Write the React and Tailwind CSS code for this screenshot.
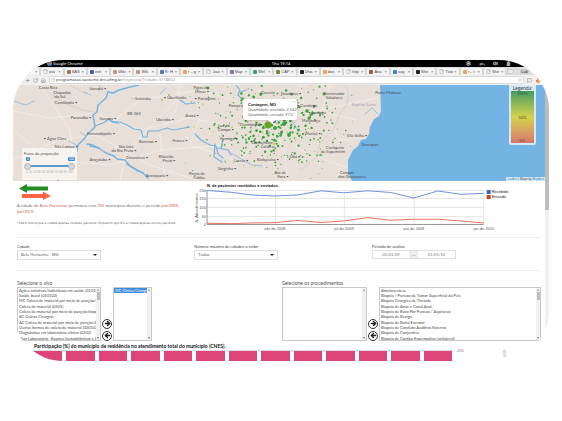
import React from "react";
import { RotateCw, House, ArrowRight, ArrowLeft, Star, File, Settings, Volume2, BatteryFull, Flame, MessageSquare } from "lucide-react";

const tabs = [
  ["", ""],
  ["pro", ""],
  ["SAS", "bg-[#a9744f]"],
  ["esti", "bg-[#3b62b8]"],
  ["Wiki", "bg-[#b79a8c]"],
  ["Wik", "bg-[#b79a8c]"],
  ["R: H", "bg-[#4b79b7]"],
  ["r – g", "bg-[#e9a95c]"],
  ["Java", ""],
  ["Map", "bg-[#8a7398]"],
  ["Wel", "bg-[#3f9b8b]"],
  ["CAP", "bg-[#6f8a3a]"],
  ["Dhis", "bg-[#222222]"],
  ["dos", "bg-[#e9a95c]"],
  ["http", ""],
  ["Ana", "bg-[#b0504e]"],
  ["sug", "bg-[#3f7fe0]"],
  ["Shir", "bg-[#222222]"],
  ["Tuto", ""],
  ["r – t", "bg-[#e9a95c]"],
  ["Shir", ""],
];

const places = [
  [48, 89, "Costa Rica"],
  [62, 94, "Chapadão"],
  [60, 98, "do Sul"],
  [66, 104, "Cassilândia •"],
  [81, 119, "Paranaíba •"],
  [108, 120, "Iturama •"],
  [141, 100, "— Ituiutaba"],
  [175, 99, "• Uberlândia"],
  [134, 115, "BR-365"],
  [165, 121, "Uberaba •"],
  [98, 90, "Itarumã •"],
  [201, 89, "Patos de"],
  [202, 93, "Minas •"],
  [205, 100, "• Patrocínio"],
  [192, 117, "Araxá •"],
  [236, 107, "Pompéu"],
  [268, 94, "Curvelo"],
  [291, 95, "Guanhães •"],
  [334, 95, "Governador"],
  [334, 99, "Valadares"],
  [307, 107, "• Caratinga"],
  [317, 114, "• Ipatinga"],
  [364, 106, "Espírito Santo"],
  [388, 94, "Porto Mattoso"],
  [101, 135, "Fernandópolis •"],
  [55, 140, "• Água Clara"],
  [66, 148, "Três Lagoas •"],
  [126, 148, "São José"],
  [124, 152, "do Rio Preto •"],
  [148, 143, "Barretos •"],
  [180, 142, "Franca •"],
  [100, 161, "Araçatuba •"],
  [137, 159, "Catanduva •"],
  [166, 158, "Ribeirão"],
  [169, 162, "Preto •"],
  [157, 177, "Araraquara •"],
  [224, 127, "Luz do"],
  [226, 131, "Campo •"],
  [229, 140, "Formiga •"],
  [251, 126, "Divinópolis •"],
  [262, 144, "Conselheiro"],
  [268, 148, "Lafaiete"],
  [311, 122, "Manhuaçu"],
  [313, 135, "Muriaé •"],
  [357, 137, "Vila Velha •"],
  [335, 149, "Cachoeiro"],
  [333, 153, "de Itapemirim"],
  [241, 162, "Lavras •"],
  [268, 161, "Barbacena •"],
  [295, 158, "Ubá •"],
  [227, 170, "Varginha •"],
  [197, 175, "Poços de"],
  [199, 179, "Caldas"],
  [280, 174, "Juiz de"],
  [283, 178, "Fora •"],
  [347, 174, "Campos"],
  [352, 178, "dos Goytacazes"],
  [370, 146, "Guarapari"],
];

function makeDots() {
  let seed = 41;
  const next = () => {
    seed = (seed * 16807) % 2147483647;
    return seed / 2147483647;
  };
  const dots = [];
  for (let i = 0; i < 370; i++) {
    const x = 272 + (next() + next() - 1) * 90;
    const y = 128 + (next() * 0.6 + next() * 0.4 - 0.5) * 104;
    const far = Math.hypot(x - 275, (y - 115) * 1.2) / 75;
    const r = 0.4 + next() * Math.max(0.25, 1.4 - far);
    dots.push([x, y, r, next() > 0.95 ? "#c8cf3a" : "#3ba13b"]);
  }
  return dots;
}

const dots = makeDots();

function MapDrawing() {
  return (
    <svg viewBox="13 85 532 96" preserveAspectRatio="xMinYMin slice" className="block h-24 w-full bg-[#e8dfd8]" role="img" aria-label="Mapa de municípios">
      <g fill="none" stroke="#f5f0ea" strokeWidth="0.7">
        <path d="M13 111L50 118 95 113 140 130 190 118 240 128 272 122 320 110 381 97" />
        <path d="M13 160L60 140 96 135 150 165 200 181M96 135L140 100 200 90 260 108 272 122 300 150 347 168" />
        <path d="M40 85L70 130 76 181M180 85L176 110 160 135 165 181M272 122L245 155 220 181M272 122L284 150 288 181M330 85L322 110 340 140 362 138M120 181L126 152 176 100M200 118L190 145 240 162" />
        <path d="M13 130L50 160 110 165 160 150 230 145M300 85L305 107 357 120" />
      </g>
      <path d="M48 92L64 103 82 110 94 112M70 85L86 94" fill="none" stroke="#c9bfba" strokeWidth="0.5" />
      <g fill="none" stroke="#77b3e0" strokeLinejoin="round" strokeLinecap="round">
        <path strokeWidth="1.5" d="M139 85L130 87 119 90 113 93 108 92 106 98 98 105 97 112 93 115 95 127 86 136 84 139 78 145 77 151 70 160 63 172 58 181" />
        <path strokeWidth="1.4" d="M87 144L93 145 100 149 106 153 114 156 117 159 125 160 130 166 137 170 143 173 148 178" />
        <path strokeWidth="1.1" d="M95 126L103 123 109 119 112 122 120 122 127 125 134 129 141 130 143 137 147 137 148 131 158 131 167 128 173 130 190 127" />
        <path strokeWidth="1.6" d="M111 121L118 123M90 146L99 148M127 164L138 171" />
        <path strokeWidth="1.2" d="M195 134L201 140 210 145 216 146 218 154 223 158M215 144L214 157 222 162M218 148L228 150 231 155M223 140L221 148" />
        <path strokeWidth="1.2" d="M236 85L240 90 238 95 242 99M241 92L246 90M180 100L186 104 195 103" />
        <path strokeWidth="0.7" d="M13 101L26 105 34 101M40 181L50 170 68 163M69 141L78 146M86 136L80 132M100 85L99 91M166 88L160 94M84 92L91 95M365 114L372 108 378 114M231 153L243 160 252 165 262 166M287 117L294 124 298 131" />
      </g>
      <path d="M345 85C352 95 347 106 341 112L333 130 320 143 317 157 300 170" fill="none" stroke="#cdc3c8" strokeWidth="0.6" />
      <path d="M380 85L381 111 379 116 374 119 370 127 369 134 366 139 361 140 358 146 353 150 350 156 348 160 348 174 351 178 352 181H545V85Z" fill="#73b4e5" />
      {dots.map(([x, y, r, fill], i) => (
        <circle key={i} cx={x} cy={y} r={r} fill={fill} />
      ))}
      <circle cx="208" cy="88" r="1.4" fill="#3ba13b" />
      <circle cx="261" cy="94" r="1.6" fill="#3ba13b" />
      <circle cx="307" cy="111" r="1.8" fill="#3ba13b" />
      <circle cx="324" cy="94" r="1.4" fill="#3ba13b" />
      <circle cx="289" cy="135" r="1.9" fill="#3ba13b" />
      <circle cx="162" cy="100" r="1.1" fill="#b8c23a" />
      <circle cx="169" cy="95" r="0.8" fill="#3ba13b" />
      <circle cx="284" cy="124" r="2" fill="#3ba13b" />
      <circle cx="275" cy="128" r="2" fill="#3ba13b" />
      <circle cx="268" cy="125" r="3.6" fill="#6aa521" />
      <circle cx="274" cy="121" r="2" fill="#2c64b8" />
      <g fontSize="4" textAnchor="middle" className="font-['Lato',sans-serif]">
        {places.map(([x, y, name]) => (
          <text key={name + x} x={x} y={y} fill={name === "Espírito Santo" ? "#a9a3b5" : "#4c4a4a"}>
            {name}
          </text>
        ))}
      </g>
    </svg>
  );
}

const rangeClass =
  "pointer-events-none absolute inset-0 h-2 w-full appearance-none bg-transparent [&::-webkit-slider-thumb]:h-[7px] [&::-webkit-slider-thumb]:w-[7px] [&::-webkit-slider-thumb]:appearance-none [&::-webkit-slider-thumb]:rounded-full [&::-webkit-slider-thumb]:border [&::-webkit-slider-thumb]:border-[#b5b5b5] [&::-webkit-slider-thumb]:bg-[#d8d8d8]";

function MapPanel() {
  return (
    <section className="relative">
      <MapDrawing />
      <div className="absolute bottom-px left-[9px] h-8 w-[55px] rounded-xs bg-[#f7f5f2]/90 px-[2px] pt-[3px]">
        <label htmlFor="min" className="block text-[4px] leading-[5px]">Faixa da proporção:</label>
        <div className="mt-px flex justify-between text-[3px] leading-[4px] text-white">
          <span className="ml-[2px] rounded-[1px] bg-[#428bca] px-px">0</span>
          <span className="rounded-[1px] bg-[#428bca] px-px">100</span>
        </div>
        <div className="relative mt-px h-2">
          <div className="absolute inset-x-1 top-[3px] h-[2px] bg-[#5a97cf]" />
          <input id="min" type="range" defaultValue="0" className={rangeClass} />
          <input type="range" aria-label="Máximo" defaultValue="100" className={rangeClass} />
        </div>
        <div className="flex justify-between px-[2px] text-[3px] leading-[4px] text-[#aaa]">
          {[0, 10, 20, 30, 40, 50, 60, 70, 80, 90, 100].map((n) => <span key={n}>{n}</span>)}
        </div>
      </div>
      <div className="absolute top-[14px] left-[230px] h-[21px] w-[54px] rounded-[3px] bg-white px-[5px] pt-[3px] font-['Lato',sans-serif] text-[4px] leading-[5px] text-[#666] shadow-sm">
        <p className="font-['Liberation_Sans',sans-serif] font-bold text-[#222]">Contagem, MG</p>
        <p className="whitespace-nowrap">Quantidade recebida: 2,542</p>
        <p className="whitespace-nowrap">Quantidade enviada: 97,5</p>
        <button aria-label="Fechar" className="absolute top-px right-[2px] leading-[4px] text-[#999]">×</button>
        <div className="absolute top-full left-[25px] border-x-4 border-t-[3px] border-x-transparent border-t-white" />
      </div>
      <div className="absolute top-0 right-[9px] w-[27px] rounded-b-xs bg-[#d7e9f5] px-[2px] pb-[2px] text-center text-[#444]">
        <p className="font-['Lato',sans-serif] text-[5px] leading-[6px]">Legenda:</p>
        <div className="flex h-[52px] flex-col justify-between bg-linear-to-b from-[#3f9b5f] via-[#d3d347] to-[#d6756b] text-[4px] leading-[5px]">
          <span>100%</span><span>50%</span><span>0%</span>
        </div>
      </div>
      <div className="absolute right-0 bottom-0 bg-white/70 px-px font-['Open_Sans',sans-serif] text-[3px] leading-[4px] text-[#333]">
        <a href="#leaflet" className="text-[#0078a8]">Leaflet</a> | Maps by <a href="#mapbox" className="text-[#0078a8]">Mapbox</a>
      </div>
    </section>
  );
}

function Chart() {
  return (
    <svg viewBox="194 182 347 51" className="col-span-2 block w-full font-['Liberation_Sans',sans-serif]" fontSize="4" fill="#555" role="img" aria-label="Pacientes recebidos e enviados">
      <text x="207" y="187" fill="#111" fontWeight="bold">N. de pacientes recebidos e enviados.</text>
      <path d="M207 190.5H484M207 198.5H484M207 207.5H484M207 216.5H484M275.5 190V224M344.5 190V224M414.5 190V224M484 190V224" stroke="#dcdcdc" strokeWidth="0.7" />
      <path d="M207 190V224.5H484" stroke="#777" strokeWidth="0.8" fill="none" />
      <polyline fill="none" stroke="#6f8fdd" strokeWidth="1" points="207,190.5 231,192.3 252,195 275,196 298,195 321,190.8 344,192.8 368,190.8 391,192.5 414,198 438,191 461,194.3 484,193.4" />
      <polyline fill="none" stroke="#e8705a" strokeWidth="1" points="207,223.3 231,223.7 252,223 275,222.7 298,220.5 321,222.5 344,221 368,217.7 391,220.3 414,219.3 438,219.3 461,221 484,223" />
      <g textAnchor="end">
        <text x="206" y="192">200</text>
        <text x="206" y="200">150</text>
        <text x="206" y="209">100</text>
        <text x="206" y="218">50</text>
        <text x="206" y="226">0</text>
      </g>
      <g textAnchor="middle">
        <text x="275" y="230">abr de 2009</text>
        <text x="344" y="230">jul de 2009</text>
        <text x="414" y="230">out de 2009</text>
        <text x="484" y="230">jan de 2010</text>
        <text transform="translate(198 208) rotate(-90)">N. Atendimentos</text>
      </g>
      <rect x="487" y="190" width="4" height="4" fill="#3366cc" />
      <rect x="487" y="195" width="4" height="4" fill="#dc3912" />
      <text x="492" y="193" fill="#222">Recebido</text>
      <text x="492" y="198" fill="#222">Enviado</text>
    </svg>
  );
}

function Dropdown({ id, label, value }) {
  return (
    <div>
      <label htmlFor={id} className="block leading-[5px] font-medium text-[#444]">{label}</label>
      <div className="relative mt-px w-[84px]">
        <select id={id} className="block h-[10px] w-full appearance-none border border-[#dedede] bg-white px-[3px] font-['Open_Sans',sans-serif] text-[4px] leading-[8px] text-[#444]">
          <option>{value}</option>
        </select>
        <span className="pointer-events-none absolute top-1 right-1 border-x-2 border-t-2 border-x-transparent border-t-[#222]" />
      </div>
    </div>
  );
}

function ListBox({ label, items = [], selected, thumb, className }) {
  return (
    <div className={"flex h-[54px] overflow-hidden border border-[#c9c9c9] bg-white " + className}>
      <select multiple aria-label={label} size={10} defaultValue={selected ? [selected] : []} className="block h-full min-w-0 flex-1 appearance-none overflow-hidden bg-white font-['Lato',sans-serif] text-[4px] text-[#444] outline-none">
        {items.map((item) => (
          <option key={item} className="block min-h-0 px-px py-0 leading-[5px] checked:bg-[#3d8be0] checked:bg-linear-to-b checked:from-[#3d8be0] checked:to-[#3d8be0] checked:text-white [&:nth-child(3n)]:pb-px">{item}</option>
        ))}
      </select>
      <div className="flex w-1 shrink-0 flex-col items-center justify-between bg-[#f1f1f1] py-px">
        <span className="border-x border-b-2 border-x-transparent border-b-[#999]" />
        {thumb && <span className="mt-px mb-auto h-2 w-[3px] bg-[#bdbdbd]" />}
        <span className="border-x border-t-2 border-x-transparent border-t-[#777]" />
      </div>
    </div>
  );
}

function MoveButtons() {
  const round = "flex h-[10px] w-[10px] items-center justify-center rounded-full border border-[#333] bg-white text-[#222]";
  return (
    <div className="flex w-3 shrink-0 flex-col items-center justify-end gap-[2px]">
      <button aria-label="Adicionar" className={round}><ArrowRight size={7} strokeWidth={5} /></button>
      <button aria-label="Remover" className={round}><ArrowLeft size={7} strokeWidth={5} /></button>
    </div>
  );
}

const targets = [
  "Ações coletivas/individuais em saúde (0101)",
  "Saúde bucal (010102)",
  "MC Coleta de material por meio de punção/biópsia",
  "Coleta de material (0201)",
  "Coleta de material por meio de punção/biopsia (020101)",
  "AC Outras Cirurgias",
  "AC Coleta de material por meio de punção/biópsia",
  "Outras formas de coleta de material (020102)",
  "Diagnóstico em laboratório clínico (0202)",
  "Diag Laboratório -Exames hematológicos e hemostasia",
];

const procedures = [
  "Amniocentese",
  "Biopsia / Puncao de Tumor Superficial da Pele",
  "Biopsia Cirurgica de Tireoide",
  "Biopsia de Anus e Canal Anal",
  "Biopsia de Baco Por Puncao / Aspiracao",
  "Biopsia de Bexiga",
  "Biopsia de Bolsa Escrotal",
  "Biopsia de Conduto Auditivo Externo",
  "Biopsia de Conjuntiva",
  "Biopsia de Cordao Espermatico (unilateral)",
];

function BrowserChrome() {
  return (
    <header>
      <div className="grid h-[7px] grid-cols-3 items-center bg-black font-['Open_Sans',sans-serif] text-[4px] leading-[7px] font-semibold text-[#ddd]">
        <div className="flex items-center gap-px pl-[34px]">
          <span className="h-[5px] w-[5px] rounded-full bg-conic from-[#d8453a] via-[#3f7fe0] to-[#5aa84a]" />
          Google Chrome
        </div>
        <div className="text-center">Thu 19:14</div>
        <div className="flex items-center justify-end gap-2 pr-[38px]">
          <Settings size={5} strokeWidth={4} />
          <span>pt₁</span>
          <Volume2 size={5} strokeWidth={4} />
          <BatteryFull size={5} strokeWidth={4} className="-rotate-90" />
        </div>
      </div>
      <nav className="flex h-2 items-end bg-[#dedede] pr-[20px] pl-[4px]">
        {tabs.map(([name, color], i) => (
          <button key={i} className="flex h-[7px] min-w-0 flex-1 items-center gap-px rounded-t-xs border-x border-[#d4d4d4] bg-[#f3f3f3] px-[2px] text-[4px] leading-[6px] text-[#444]">
            {color ? <span className={"h-1 w-1 shrink-0 rounded-[1px] " + color} /> : <File size={5} className="shrink-0 text-[#888]" />}
            <span className="flex-1 overflow-hidden text-left whitespace-nowrap">{name}</span>
            <span className="text-[#444]">×</span>
          </button>
        ))}
        <span className="mb-px ml-px h-[5px] w-[7px] rounded-xs border border-[#c8c8c8] bg-[#eee]" />
        <span className="mb-px ml-[6px] rounded-xs bg-[#ccc] px-px text-[4px] leading-[5px] text-[#333]">Lab</span>
      </nav>
      <div className="flex h-[10px] items-center gap-[3px] bg-[#efefef] pr-2 pl-3 text-[#999]">
        <button aria-label="Voltar"><ArrowRight size={5} strokeWidth={4} /></button>
        <button aria-label="Recarregar"><RotateCw size={5} strokeWidth={3} /></button>
        <button aria-label="Início"><House size={5} strokeWidth={3} /></button>
        <div className="flex h-2 flex-1 items-center gap-px rounded-xs border border-[#d8d8d8] bg-white px-px font-['Noto_Sans',sans-serif] text-[4px] leading-[6px]">
          <File size={4} />
          <span className="flex-1"><span className="text-[#333]">programasus.saotome.dcc.ufmg.br</span>/trajetoria/?cidade=3118602</span>
          <Star size={4} />
        </div>
        <MessageSquare size={5} strokeWidth={3} />
        <Flame size={6} className="fill-[#f59a2f] text-[#d9541e]" />
      </div>
    </header>
  );
}

export default function App() {
  return (
    <div className="min-h-screen bg-white px-[13px] pt-[60px] font-['Liberation_Sans',sans-serif]">
      <div className="overflow-hidden rounded-[50px]">
        <BrowserChrome />
        <div className="flex">
          <main className="min-w-0 flex-1 text-[4px] text-[#555]">
            <MapPanel />
            <div className="px-1">
              <section className="grid grid-cols-3 gap-2 border-b border-[#eee] pt-px pb-1">
                <div className="pt-[2px]">
                  <svg viewBox="0 0 34 16" className="ml-[2px] block h-4 w-[34px]" aria-hidden="true">
                    <path d="M0 4.500L8 0V2.500H29V6.500H8V9Z" fill="#228b22" />
                    <path d="M32 12L24 7.500V10H3V14H24V16Z" fill="#ff6347" />
                  </svg>
                  <p className="mt-[3px] font-['Open_Sans',sans-serif] leading-[6px]">
                    A cidade de <span className="text-[#c0392b]">Belo Horizonte</span> permutou com <span className="text-[#c0392b]">705</span> municípios durante o período <span className="text-[#c0392b]">Jan/2009 -</span> <span className="text-[#c0392b]">Jan/2010.</span>
                  </p>
                  <p className="mt-[5px] font-['DejaVu_Sans',sans-serif] text-[3px] leading-[6px] whitespace-nowrap text-[#666]">*100% indica que a cidade apenas recebeu paciente. Enquanto que 0% a cidade apenas enviou paciente.</p>
                </div>
                <Chart />
              </section>
              <section className="grid grid-cols-3 gap-2 border-b border-[#eee] pt-[6px] pb-[10px]">
                <Dropdown id="cidade" label="Cidade" value="Belo Horizonte - MG" />
                <Dropdown id="max" label="Número máximo de cidades a exibir" value="Todas" />
                <div>
                  <label htmlFor="inicio" className="block leading-[5px] font-medium text-[#444]">Período de análise</label>
                  <div className="mt-px flex h-[9px] w-[84px] border border-[#dedede] text-[#777]">
                    <input id="inicio" defaultValue="01/01/09" className="w-0 flex-1 text-center font-['Lato',sans-serif] leading-[7px]" />
                    <span className="w-[9px] bg-[#eee] text-center leading-[7px]">—</span>
                    <input aria-label="Fim do período" defaultValue="01/01/10" className="w-0 flex-1 text-center font-['Lato',sans-serif] leading-[7px]" />
                  </div>
                </div>
              </section>
              <section className="grid grid-cols-2 gap-[6px] pt-[8px]">
                <div>
                  <h2 className="font-['Lato',sans-serif] text-[5px] leading-[8px]">Selecione o alvo</h2>
                  <div className="flex">
                    <ListBox label="Alvos disponíveis" items={targets} thumb className="w-[84px]" />
                    <MoveButtons />
                    <ListBox label="Alvos escolhidos" items={["MC Clínica Cirúrgica"]} selected="MC Clínica Cirúrgica" className="w-[39px]" />
                  </div>
                </div>
                <div>
                  <h2 className="font-['Lato',sans-serif] text-[5px] leading-[8px]">Selecione os procedimentos</h2>
                  <div className="flex">
                    <ListBox label="Procedimentos escolhidos" className="w-[85px]" />
                    <MoveButtons />
                    <ListBox label="Procedimentos disponíveis" items={procedures} thumb className="flex-1" />
                  </div>
                </div>
              </section>
            </div>
            <section className="pl-[21px]">
              <h2 className="pt-px font-['Lato',sans-serif] text-[5px] leading-[8px] font-bold text-[#111]">Participação (%) do município de residência no atendimento total do município (CNES).</h2>
              <div className="flex h-[11px]">
                <div className="flex flex-1 gap-1 border-t border-[#ddd]">
                  {Array.from({ length: 13 }, (_, i) => <span key={i} className="flex-1 bg-[#dd4477]" />)}
                </div>
                <div className="flex w-[93px] gap-[38px] pl-1 leading-[1px] text-[#888]">
                  <span>-480</span>
                  <span className="h-[10px] leading-[4px] [writing-mode:vertical-rl]">600</span>
                </div>
              </div>
            </section>
          </main>
          <div className="w-1 bg-[#f0f0f0]">
            <div className="h-[125px] bg-[#bdbdbd]" />
          </div>
        </div>
      </div>
    </div>
  );
}
